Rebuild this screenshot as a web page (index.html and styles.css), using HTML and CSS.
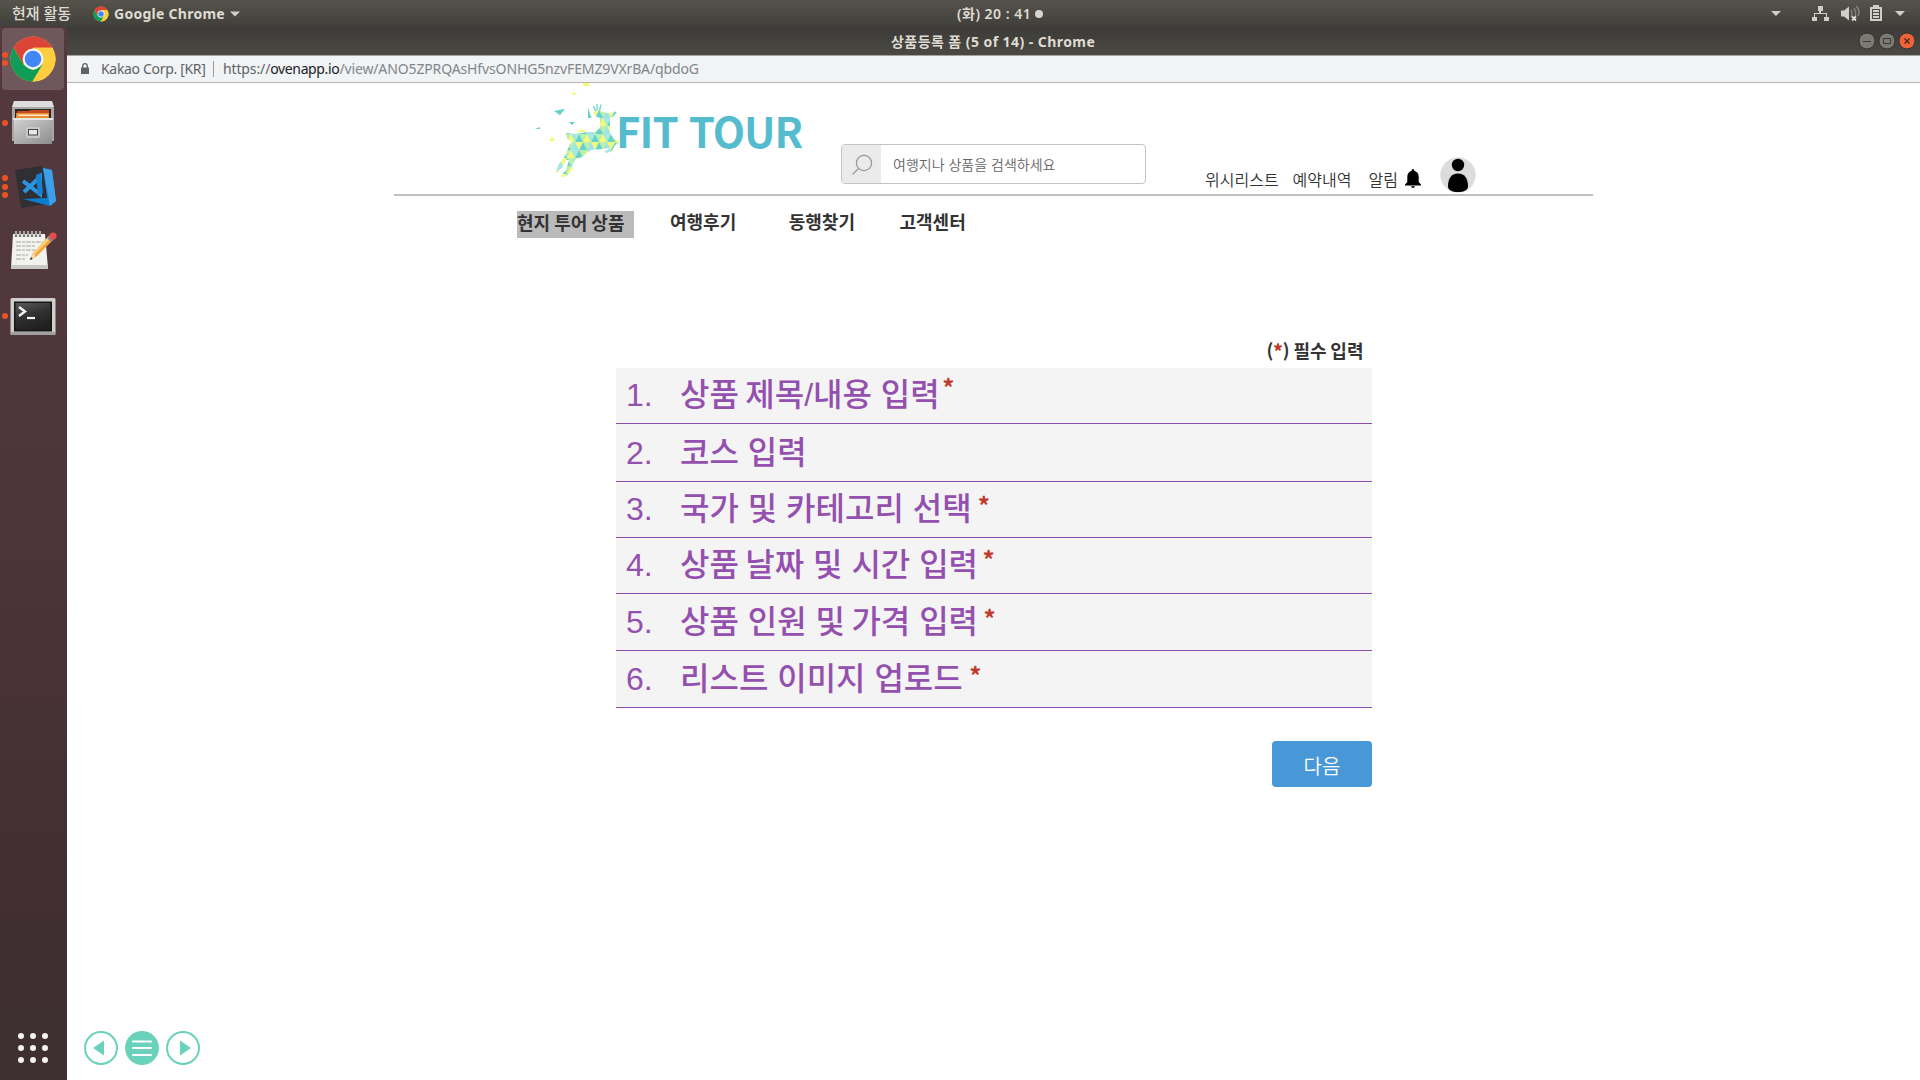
FILE: index.html
```
<!DOCTYPE html>
<html lang="ko">
<head>
<meta charset="utf-8">
<title>상품등록 폼</title>
<link rel="stylesheet" href="styles.css">
</head>
<body>
<svg width="0" height="0" class="defs">
  <defs>
    <symbol id="chrome" viewBox="0 0 48 48">
      <circle cx="24" cy="24" r="22.5" fill="#fc3"/>
      <path d="M4.5 12.8A22.5 22.5 0 0 1 43.5 12.8H24L14.3 29.6Z" fill="#db4437"/>
      <path d="M4.5 12.8A22.5 22.5 0 0 0 23.5 46.5L33.7 29.6L24 35.2L14.3 29.6Z" fill="#0f9d58"/>
      <path d="M43.5 12.8H24L33.7 29.6L23.5 46.5A22.5 22.5 0 0 0 43.5 12.8Z" fill="#ffcd40"/>
      <circle cx="24" cy="24" r="10.4" fill="#f4f6f8"/>
      <circle cx="24" cy="24" r="8.3" fill="#4285f4"/>
    </symbol>
    <linearGradient id="steel" x1="0" y1="0" x2="1" y2="1"><stop offset="0" stop-color="#d2d2d2"/><stop offset="1" stop-color="#8c8c8c"/></linearGradient>
    <linearGradient id="screen" x1="0" y1="0" x2="0.4" y2="1"><stop offset="0" stop-color="#585a58"/><stop offset=".5" stop-color="#333"/><stop offset="1" stop-color="#202020"/></linearGradient>
    <pattern id="facets" width="16" height="16" patternUnits="userSpaceOnUse" patternTransform="translate(0 3)">
      <rect width="16" height="16" fill="#b9f0b0"/>
      <path d="M0 8L4 0L8 8Z" fill="#f5fb78"/><path d="M8 8L12 0L16 8Z" fill="#66d3cb"/>
      <path d="M4 0H12L8 8Z" fill="#a5e8e6"/>
      <path d="M-4 16L0 8L4 16ZM12 16L16 8L20 16Z" fill="#66d3cb"/><path d="M4 16L8 8L12 16Z" fill="#9ee5e4"/>
      <path d="M8 8H16L12 16Z" fill="#f2fa85"/>
    </pattern>
  </defs>
</svg>
<div class="desktop">
  <header class="topbar">
    <span class="activities">현재 활동</span>
    <svg class="mini-chrome"><use href="#chrome"/></svg>
    <span class="app-name">Google Chrome</span>
    <svg class="caret" viewBox="0 0 10 6"><path d="M0 .5H10L5 5.500Z"/></svg>
    <span class="clock"><span>(화) 20 : 41</span><i></i></span>
    <svg class="tray" viewBox="0 0 140 27" fill="#d0cec9">
      <path d="M1 11H11L6 16ZM125 11H135L130 16Z"/>
      <path d="M48 6h5v5h-2v2h6v4h2v4h-5v-4h2v-3h-11v3h2v4h-5v-4h2v-4h5v-2h-1z"/>
      <path d="M71 10.500h3l5-4v14l-5-4h-3z"/>
      <path d="M81 10q2 3 0 7M84 8q3.500 5.500 0 10M86.500 6q4.500 7 1 10" fill="none" stroke="#85827b" stroke-width="1.500"/>
      <path d="M82 16.500l4 4M86 16.500l-4 4" stroke="#dcdad5" stroke-width="1.800"/>
      <path fill-rule="evenodd" d="M103 5h6v2h3v14h-12V7h3zM102 9v10h8V9z"/>
      <path d="M103 10h6v2h-6zM103 13h6v2h-6zM103 16h6v2h-6z"/>
    </svg>
  </header>
  <div class="below">
    <aside class="dock">
      <div class="app active"><span class="dots"><i></i><i></i></span><svg width="48" height="48"><use href="#chrome"/></svg></div>
      <div class="app"><span class="dots"><i></i></span>
        <svg class="files" width="46" height="48" viewBox="0 0 46 48">
          <path d="M4 3H42L44 9V42H2V9Z" fill="#a8a8a8"/><path d="M4 2H42L44 8H2Z" fill="#dedede"/><path d="M5 10H41V20H5Z" fill="#2a2622"/>
          <path d="M7 12H19L20 11H39V20H7Z" fill="#c5491a"/><path d="M6 14H39V20H6Z" fill="#e98b31"/><path d="M8 15.500H38V17H8Z" fill="#ffe9ce"/>
          <path d="M4 20H42V45H4Z" fill="url(#steel)"/><path d="M3 19H43V21H3Z" fill="#e6e6e6"/>
          <rect x="16" y="28" width="14" height="11" rx="2" fill="#c8c8c8"/><rect x="18.500" y="30.500" width="9" height="5.500" fill="#e8e8e8" stroke="#444"/>
        </svg></div>
      <div class="app code"><span class="dots"><i></i><i></i><i></i></span>
        <svg width="46" height="48" viewBox="0 0 46 48">
          <path d="M4 7L31 3L41 40L10 45Z" fill="#303034"/><path d="M32 5L41 7L45 38L39 43L12 36L36 35Z" fill="#0f7dcf"/><path d="M32 5L41 7L45 38L39 43Z" fill="#3c9fe8"/>
          <path d="M12 18L29 31V14L13 29" fill="none" stroke="#2c95e2" stroke-width="4"/><path d="M25 12L30 10L32 30L27 33Z" fill="#1481d3"/>
        </svg></div>
      <div class="app notes"><span class="dots"></span>
        <svg width="48" height="48" viewBox="0 0 48 48">
          <path d="M4 8H36L39 42H2Z" fill="#f2f2ee"/><path d="M2.500 39H39V43H2Z" fill="#c9c9c4"/>
          <path d="M7 5v6M11 5v6M15 5v6M19 5v6M23 5v6M27 5v6M31 5v6" stroke="#777" stroke-width="2.200"/><path d="M7 5v4M11 5v4M15 5v4M19 5v4M23 5v4M27 5v4M31 5v4" stroke="#ddd" stroke-width="1"/>
          <path d="M7 16h27M7 20h20M7 24h24M7 29h12M7 33h10" stroke="#a5a5a2" stroke-width="1.200" stroke-dasharray="5 1 3 1"/>
          <path d="M21 34L24 27L40 10L44 14L27 31Z" fill="#f5a43a"/><path d="M24 27L40 10L42 12L25 29Z" fill="#ffd07a"/><path d="M21 34L24 27L27 31Z" fill="#f4d6aa"/><path d="M21 34l1-3 1.500 2z" fill="#222"/>
          <path d="M38 12L41 9L45 13L42 16Z" fill="#8b8b8b"/><circle cx="44" cy="10" r="3.600" fill="#e84a4a"/>
        </svg></div>
      <div class="app"><span class="dots"><i></i></span>
        <svg width="48" height="48" viewBox="0 0 48 48">
          <rect x="1.500" y="6" width="45" height="36.500" rx="1.500" fill="#cfcfcf"/><path d="M1.500 40H46.500V43H1.500Z" fill="#a0a0a0"/><rect x="5" y="9.500" width="38" height="30" fill="#151515"/><rect x="6.500" y="11" width="35" height="27" fill="url(#screen)"/>
          <path d="M10 15L16 19.500L10 24" fill="none" stroke="#f4f4f4" stroke-width="2.400"/><path d="M18 26H26" stroke="#f4f4f4" stroke-width="2.200"/>
        </svg></div>
      <svg class="grid-btn" viewBox="0 0 30 30" fill="#f4f2f1"><circle cx="3" cy="3" r="3"/><circle cx="15" cy="3" r="3"/><circle cx="27" cy="3" r="3"/><circle cx="3" cy="15" r="3"/><circle cx="15" cy="15" r="3"/><circle cx="27" cy="15" r="3"/><circle cx="3" cy="27" r="3"/><circle cx="15" cy="27" r="3"/><circle cx="27" cy="27" r="3"/></svg>
    </aside>
    <section class="window">
      <div class="titlebar">
        <span class="title">상품등록 폼 (5 of 14) - Chrome</span>
        <svg class="controls" viewBox="0 0 58 18">
          <circle cx="9" cy="9" r="8" fill="#7b7974" stroke="#35342f"/><path d="M5 9.500H13" stroke="#3b3a36"/>
          <circle cx="29" cy="9" r="8" fill="#7b7974" stroke="#35342f"/><path d="M25.500 6.500H32.500V11.500H25.500Z" fill="none" stroke="#3b3a36"/>
          <circle cx="49" cy="9" r="8" fill="#ee6237" stroke="#35342f"/><path d="M46.500 6.500L51.500 11.500M51.500 6.500L46.500 11.500" stroke="#43281c" stroke-width="1.300"/>
        </svg>
      </div>
      <div class="urlbar">
        <svg class="lock" viewBox="0 0 8 12"><path d="M0 4.500H8V11H0Z" fill="#5f6368"/><path d="M1.700 5V3A2.300 2.300 0 0 1 6.300 3V5" fill="none" stroke="#5f6368" stroke-width="1.300"/></svg>
        <span class="corp">Kakao Corp. [KR]</span>
        <i class="sep"></i>
        <span class="url">https://<b>ovenapp.io</b><em>/view/ANO5ZPRQAsHfvsONHG5nzvFEMZ9VXrBA/qbdoG</em></span>
      </div>
      <main class="page">
        <div class="site-head">
          <svg class="deer" viewBox="0 0 86 96">
            <g fill="#66d3cb"><path d="M19 28L30 25.700L25 32.300ZM34 39L40 39L37 42ZM0 46L5 44V46ZM53 35V24.500L56.500 35ZM79.500 28L82 30L80 31Z"/><path d="M58.500 23L60 27L63 29M62 21V28M66 21.500L64.500 28" stroke="#7ddccf" stroke-width="1.500" fill="none"/></g>
            <g fill="#f5fb78"><path d="M48 0H54L55 3H48ZM38 8L42 12L38 12ZM14 58L17 53.500L20.500 58ZM42 49Q47 44 51 49Z"/></g>
            <path fill="url(#facets)" d="M58 30L62 27L68 29L73 30L81 29L79 33L75 35V50L79 56L84 58L83 61L80 62L77 68L72 70L69 69L75 65L67 66L56 67L47 74L41 76L38 80L37 86L33 92L27 94.500L26 93L31 87L34 77L31 77L27 85L23 88L22 91L20.500 89L24 81L30 73L35 61L37 59L32 56L31 50L40 51L52 49L60 49L65 45V35L60 33Z"/>
          </svg>
          <h1 class="brand">FIT TOUR</h1>
          <div class="search">
            <span class="search-icon"><svg viewBox="0 0 22 22"><circle cx="13" cy="9" r="7.600"/><path d="M7.500 14.500L1.500 20.500"/></svg></span>
            <span class="hint">여행지나 상품을 검색하세요</span>
          </div>
          <div class="user-links">
            <span>위시리스트</span><span>예약내역</span><span>알림</span>
            <svg class="bell" viewBox="0 0 16 19"><path d="M8 0Q9.300 0 9.400 1.700Q13.700 3 13.700 8V13L16 15.500V16.500H0V15.500L2.300 13V8Q2.300 3 6.600 1.700Q6.700 0 8 0ZM6 17.300H10Q9.700 19 8 19Q6.300 19 6 17.300Z"/></svg>
            <svg class="avatar" viewBox="0 0 36 36"><circle cx="18" cy="18" r="17.700" fill="#dcdcdc"/><circle cx="18" cy="8" r="6.200"/><path d="M8 29C8 21 12 16.500 18 16.500S28 21 28 29C28 33 24 35 18 35S8 33 8 29Z"/></svg>
          </div>
        </div>
        <nav class="menu">
          <span class="current">현지 투어 상품</span><span>여행후기</span><span>동행찾기</span><span>고객센터</span>
        </nav>
        <div class="form">
          <p class="required">(<b>*</b>) 필수 입력</p>
          <ol class="steps">
            <li><span class="num">1.</span><span class="label">상품<span class="thin"> </span>제목/내용 입력</span><b class="s1">*</b></li>
            <li class="tall"><span class="num">2.</span><span class="label">코스 입력</span></li>
            <li><span class="num">3.</span><span class="label">국가 및 카테고리 선택</span><b class="s3">*</b></li>
            <li><span class="num">4.</span><span class="label">상품<span class="thin"> </span>날짜 및 시간 입력</span><b class="s4">*</b></li>
            <li class="mid"><span class="num">5.</span><span class="label">상품 인원 및<span class="thin"> </span>가격 입력</span><b class="s5">*</b></li>
            <li class="mid"><span class="num">6.</span><span class="label">리스트 이미지 업로드</span><b class="s6">*</b></li>
          </ol>
          <button class="next" type="button">다음</button>
        </div>
        <div class="pager">
          <svg viewBox="0 0 34 34"><circle cx="17" cy="17" r="16" class="ring"/><path d="M9 17L20 9.500V24.500Z"/></svg>
          <svg viewBox="0 0 34 34"><circle cx="17" cy="17" r="17"/><path class="bars" d="M8 10.500H26M8 17H26M8 24H26"/></svg>
          <svg viewBox="0 0 34 34"><circle cx="17" cy="17" r="16" class="ring"/><path d="M25 17L14 9.500V24.500Z"/></svg>
        </div>
      </main>
    </section>
  </div>
</div>
</body>
</html>
```
FILE: styles.css
```
* { box-sizing: border-box; margin: 0; padding: 0; }
body { background: #fff; font-family: "Noto Sans CJK KR", sans-serif; overflow: hidden; }
svg { display: block; flex: none; }
i, em { font-style: normal; }
.defs { height: 0; }
.desktop { width: 1920px; height: 1080px; display: flex; flex-direction: column; white-space: nowrap; }

/* System bar */
.topbar { height: 27px; display: grid; grid-template-columns: 81px 21px 116px 15px 1fr 140px; align-items: center; padding: 0 10px 0 12px; background: linear-gradient(#56534c, #403f3a); color: #dfdbd2; font: 500 14px/27px "Noto Sans", "Noto Sans CJK KR", sans-serif; }
.activities { font-size: 15px; }
.mini-chrome { width: 16px; height: 16px; }
.app-name { font-weight: 700; letter-spacing: .27px; }
.caret { width: 10px; height: 6px; fill: #d0cec9; }
.clock { display: flex; align-items: center; gap: 4px; font-weight: 600; padding-left: 712px; letter-spacing: .5px; }
.clock i { width: 8px; height: 8px; border-radius: 50%; background: #d6d4cf; }
.tray { width: 140px; height: 27px; }

/* Dock */
.below { flex: 1; display: flex; min-height: 0; }
.dock { width: 67px; background: linear-gradient(#543a40, #4c3439 50%, #402e32 85%, #3d3032); display: flex; flex-direction: column; padding: 1px 2px 17px; }
.app { height: 62px; margin-bottom: 2.3px; display: flex; align-items: center; border-radius: 4px; }
.active { width: 62px; background: #6f585c; }
.dots { width: 7px; display: flex; flex-direction: column; gap: 2.5px; flex: none; }
.dots i { width: 6px; height: 6px; border-radius: 50%; background: #e95420; }
.files { margin-left: 1px; }
.code { padding-bottom: 2px; }
.code svg { margin-left: 2px; }
.notes { padding-bottom: 4px; }
.grid-btn { width: 30px; height: 30px; margin: auto 0 0 16px; }

/* Browser window */
.window { flex: 1; display: flex; flex-direction: column; }
.titlebar { height: 29px; background: linear-gradient(#3c3b37, #4b4943); border-bottom: 1px solid #a3a29e; display: flex; justify-content: space-between; align-items: center; padding: 0 4px 0 824px; color: #dfdbd2; font: 700 14px/27px "Noto Sans", "Noto Sans CJK KR", sans-serif; letter-spacing: .44px; }
.controls { width: 58px; height: 18px; }
.urlbar { height: 27px; background: #f1f3f4; border-bottom: 1px solid #b4b5b6; display: flex; align-items: center; padding-left: 14px; color: #5f6368; font: 400 14px/26px "Noto Sans", sans-serif; }
.lock { width: 8px; height: 12px; margin-right: 12px; }
.corp { width: 112px; letter-spacing: -.32px; }
.sep { width: 1px; height: 16px; background: #9a9da0; margin-right: 9px; }
.url { letter-spacing: -.13px; }
.url b { font-weight: 400; color: #202124; letter-spacing: -.36px; }
.url em { color: #80868b; }

/* Page header */
.page { flex: 1; display: flex; flex-direction: column; padding: 0 327px 15px 17px; }
.site-head { width: 1199px; height: 113px; margin-left: 310px; border-bottom: 2px solid #c0c0c0; display: flex; }
.deer { width: 86px; height: 96px; margin-left: 141px; }
.brand { width: 225px; margin-left: -5px; font-size: 42px; line-height: 93px; font-weight: 700; letter-spacing: -.95px; color: #55bccf; }
.search { width: 305px; height: 40px; margin-top: 61px; border: 1px solid #c4c4c4; border-radius: 4px; display: flex; overflow: hidden; }
.search-icon { width: 39px; background: #ebebeb; padding: 9px 0 0 9px; }
.search-icon svg { width: 22px; height: 22px; fill: none; stroke: #999; stroke-width: 1.3; }
.hint { font-size: 14px; line-height: 38px; color: #666; padding-left: 12px; font-weight: 350; }
.user-links { display: flex; margin-left: 59px; padding-top: 74px; font-size: 16px; line-height: 44px; color: #333; font-weight: 350; }
.user-links span { margin-right: 14px; }
.user-links span:nth-child(2) { margin-right: 17px; }
.user-links span:nth-child(3) { margin-right: 7px; }
.bell { width: 16px; height: 19px; margin-top: 12px; }
.avatar { width: 36px; height: 36px; margin-left: 19px; }
.menu { display: flex; padding: 15px 0 0 433px; font-size: 18px; line-height: 21px; font-weight: 600; color: #333; }
.menu > span { margin-right: 44.5px; }
.menu > span:nth-child(2) { margin-right: 52.5px; }
.menu .current { width: 117px; height: 27px; line-height: 23px; word-spacing: -1px; background: #bababa; margin-right: 36px; }

/* Registration steps */
.form { width: 756px; margin: 98px 0 0 532px; display: flex; flex-direction: column; }
.required { height: 32px; font-size: 18px; line-height: 29px; font-weight: 600; word-spacing: -1.2px; color: #333; text-align: right; padding-right: 8.5px; }
.required b, .steps b { color: #c0392b; }
.steps { list-style: none; }
.steps li { height: 56px; display: flex; background: #f4f4f4; border-bottom: 1px solid #8e4cac; color: #9450ae; border-radius: 2px 2px 0 0; font: 500 32px/54px "Liberation Sans", "Noto Sans CJK KR", sans-serif; padding-left: 10px; }
.steps .tall { height: 58px; padding-top: 2px; }
.steps .mid { height: 57px; padding-top: 1px; }
.num { width: 54px; font-weight: 400; }
.thin { letter-spacing: -2.5px; }
.steps b { font: 700 24px/38px "Noto Sans CJK KR", sans-serif; margin-left: 4.5px; }
.steps .s1 { margin-left: 2.5px; }
.steps .s3 { margin-left: 6px; line-height: 45px; }
.steps .s4 { line-height: 41px; }
.steps .s5 { margin-left: 5.5px; line-height: 46px; }
.steps .s6 { margin-left: 6.5px; line-height: 46px; }
.next { width: 100px; height: 46px; margin: 33px 0 0 auto; border: 0; border-radius: 4px; background: #4897d6; color: #fff; font: 350 20px/46px "Noto Sans CJK KR", sans-serif; padding-top: 2px; }

/* Viewer controls */
.pager { margin-top: auto; display: flex; gap: 7px; fill: #6ad1bb; }
.pager svg { width: 34px; height: 34px; }
.ring { fill: none; stroke: #6ad1bb; stroke-width: 2; }
.bars { stroke: #fff; stroke-width: 2; stroke-linecap: round; }
```
